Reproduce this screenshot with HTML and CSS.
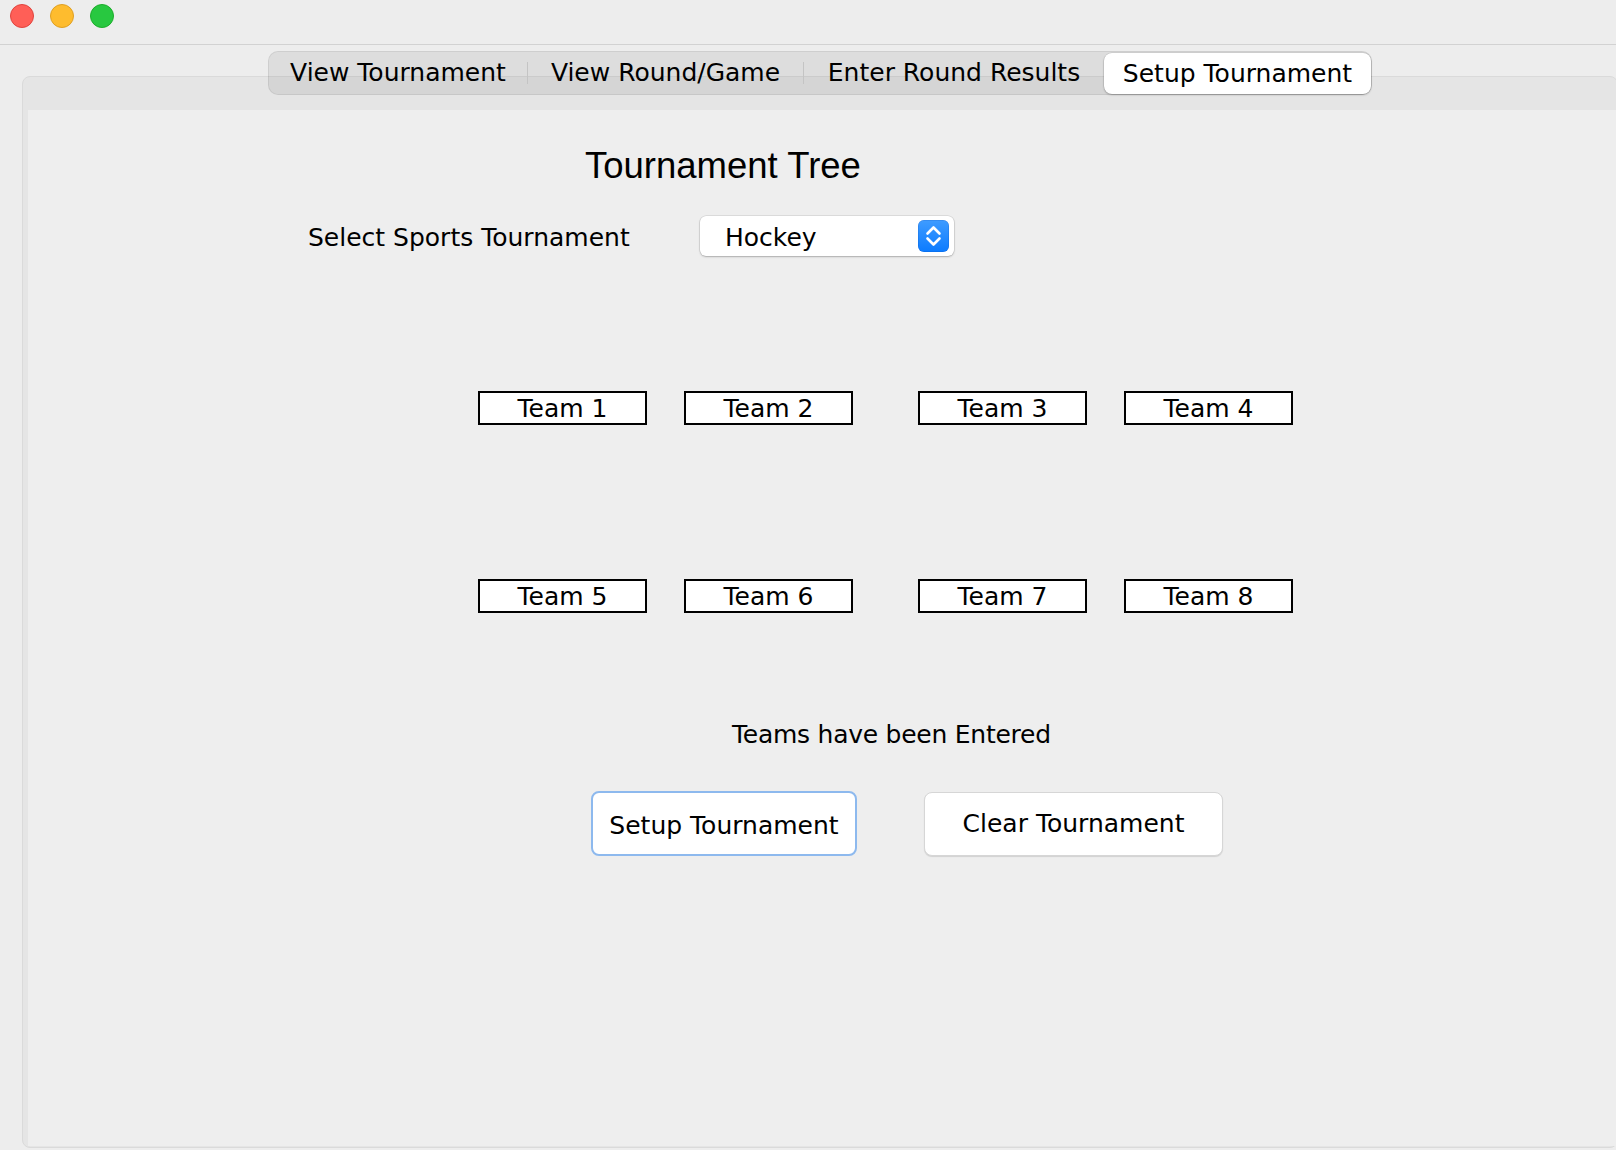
FILE: index.html
```html
<!DOCTYPE html>
<html lang="en">
<head>
<meta charset="utf-8">
<title>Tournament Tree</title>
<link rel="stylesheet" href="styles.css">
</head>
<body>
<div class="window">
  <div class="titlebar">
    <span class="light red"></span>
    <span class="light yellow"></span>
    <span class="light green"></span>
  </div>
  <div class="tabs-row">
    <div class="tabs">
      <div class="tab tab-1">View Tournament</div>
      <span class="sep"></span>
      <div class="tab tab-2">View Round/Game</div>
      <span class="sep"></span>
      <div class="tab tab-3">Enter Round Results</div>
      <div class="tab tab-4 selected">Setup Tournament</div>
    </div>
  </div>
  <div class="panel">
    <div class="content">
      <h1 class="heading">Tournament Tree</h1>
      <div class="select-row">
        <span class="select-label">Select Sports Tournament</span>
        <div class="select">
          <span class="select-value">Hockey</span>
          <span class="stepper">
            <svg width="31" height="32" viewBox="0 0 31 32">
              <path d="M9.5 13.5 L15.5 7.5 L21.5 13.5" fill="none" stroke="#fff" stroke-width="2.6" stroke-linecap="round" stroke-linejoin="round"/>
              <path d="M9.5 18.5 L15.5 24.5 L21.5 18.5" fill="none" stroke="#fff" stroke-width="2.6" stroke-linecap="round" stroke-linejoin="round"/>
            </svg>
          </span>
        </div>
      </div>
      <div class="team-row row-a">
        <div class="pair">
          <div class="team">Team 1</div>
          <div class="team">Team 2</div>
        </div>
        <div class="pair">
          <div class="team">Team 3</div>
          <div class="team">Team 4</div>
        </div>
      </div>
      <div class="team-row row-b">
        <div class="pair">
          <div class="team">Team 5</div>
          <div class="team">Team 6</div>
        </div>
        <div class="pair">
          <div class="team">Team 7</div>
          <div class="team">Team 8</div>
        </div>
      </div>
      <p class="message">Teams have been Entered</p>
      <div class="button-row">
        <button class="btn btn-setup">Setup Tournament</button>
        <button class="btn btn-clear">Clear Tournament</button>
      </div>
    </div>
  </div>
</div>
</body>
</html>
```
FILE: styles.css
```css
* { box-sizing: border-box; }

html, body {
  margin: 0;
  padding: 0;
  background: #ededed;
  overflow: hidden;
  width: 1616px;
  height: 1150px;
}

body {
  font-family: "DejaVu Sans", "Liberation Sans", sans-serif;
  font-size: 25px;
  letter-spacing: 0;
  color: #000;
}

.window {
  display: flex;
  flex-direction: column;
  height: 1150px;
}

.titlebar {
  height: 45px;
  border-bottom: 1px solid #d2d2d2;
  display: flex;
  align-items: flex-start;
  padding: 4px 0 0 10px;
  gap: 16px;
  flex: none;
}

.light {
  width: 24px;
  height: 24px;
  border-radius: 50%;
  display: block;
}
.red { background: #ff5f57; border: 1px solid #e0443e; }
.yellow { background: #febc2e; border: 1px solid #dfa023; }
.green { background: #28c840; border: 1px solid #1dad2b; }

.tabs-row {
  display: flex;
  justify-content: center;
  margin: 6px -2px 0 22px;
  position: relative;
  z-index: 1;
  flex: none;
}

.tabs {
  display: flex;
  align-items: center;
  height: 44px;
  border: 1px solid rgba(0, 0, 0, 0.07);
  border-radius: 10px;
  background: rgba(0, 0, 0, 0.065);
}

.tab {
  height: 42px;
  line-height: 42px;
  padding-top: 0;
  text-align: center;
  white-space: nowrap;
}
.tab-1 { width: 258px; }
.tab-2 { width: 275px; }
.tab-3 { width: 300px; }
.tab-4 { width: 267px; }

.tab.selected {
  height: 41px;
  line-height: 40px;
  padding-top: 1px;
  background: #fff;
  border-radius: 8px;
  box-shadow: 0 0 0 0.5px rgba(0, 0, 0, 0.12), 0 1px 2px rgba(0, 0, 0, 0.25);
}

.sep {
  width: 1px;
  height: 22px;
  background: #c4c4c4;
  flex: none;
}

.panel {
  margin: -19px -2px 0 22px;
  height: 1072px;
  background: #e5e5e5;
  border: 1px solid #dadada;
  border-radius: 8px;
  padding: 33px 0 1px 5px;
  display: flex;
  flex: none;
}

.content {
  flex: 1;
  background: #eeeeee;
  padding-top: 35px;
}

.heading {
  margin: 0 0 0 557px;
  font-family: "Liberation Sans", Arial, sans-serif;
  font-weight: normal;
  font-size: 36.5px;
  letter-spacing: 0;
  line-height: 42px;
  height: 42px;
}

.select-row {
  display: flex;
  align-items: center;
  margin: 29px 0 0 280px;
  height: 40px;
}

.select-label {
  width: 392px;
  line-height: 40px;
  padding-top: 3px;
}

.select {
  width: 254px;
  height: 40px;
  background: #fff;
  border-radius: 6px;
  box-shadow: 0 0 0 0.5px rgba(0, 0, 0, 0.14), 0 1px 2px rgba(0, 0, 0, 0.22);
  display: flex;
  align-items: center;
  justify-content: space-between;
  padding: 0 5px 0 25px;
}

.select-value {
  line-height: 40px;
  padding-top: 3px;
}

.stepper {
  width: 31px;
  height: 32px;
  border-radius: 6px;
  background: linear-gradient(#3f9cff, #0b7bff);
  display: flex;
  box-shadow: inset 0 0 0 0.5px rgba(0, 60, 160, 0.3);
}

.team-row {
  display: flex;
  gap: 65px;
  margin-left: 450px;
}
.row-a { margin-top: 135px; }
.row-b { margin-top: 154px; }

.pair {
  display: flex;
  gap: 37px;
}

.team {
  width: 169px;
  height: 34px;
  border: 2px solid #000;
  background: #fff;
  text-align: center;
  line-height: 30px;
  padding-top: 1px;
}

.message {
  margin: 107px 0 0 704px;
  line-height: 30px;
  letter-spacing: -0.25px;
}

.button-row {
  display: flex;
  align-items: flex-start;
  margin: 41px 0 0 563px;
}

.btn {
  font-family: inherit;
  font-size: 25px;
  letter-spacing: 0;
  color: #000;
  background: #fff;
  border-radius: 8px;
  padding: 0;
  margin: 0;
  text-align: center;
}

.btn-setup {
  width: 266px;
  height: 65px;
  border: 2px solid #8db9ee;
  padding-top: 3px;
}

.btn-clear {
  width: 299px;
  height: 64px;
  margin: 1px 0 0 67px;
  border: 1px solid #d6d6d6;
  box-shadow: 0 1px 1px rgba(0, 0, 0, 0.12);
  padding-bottom: 2px;
}
```
